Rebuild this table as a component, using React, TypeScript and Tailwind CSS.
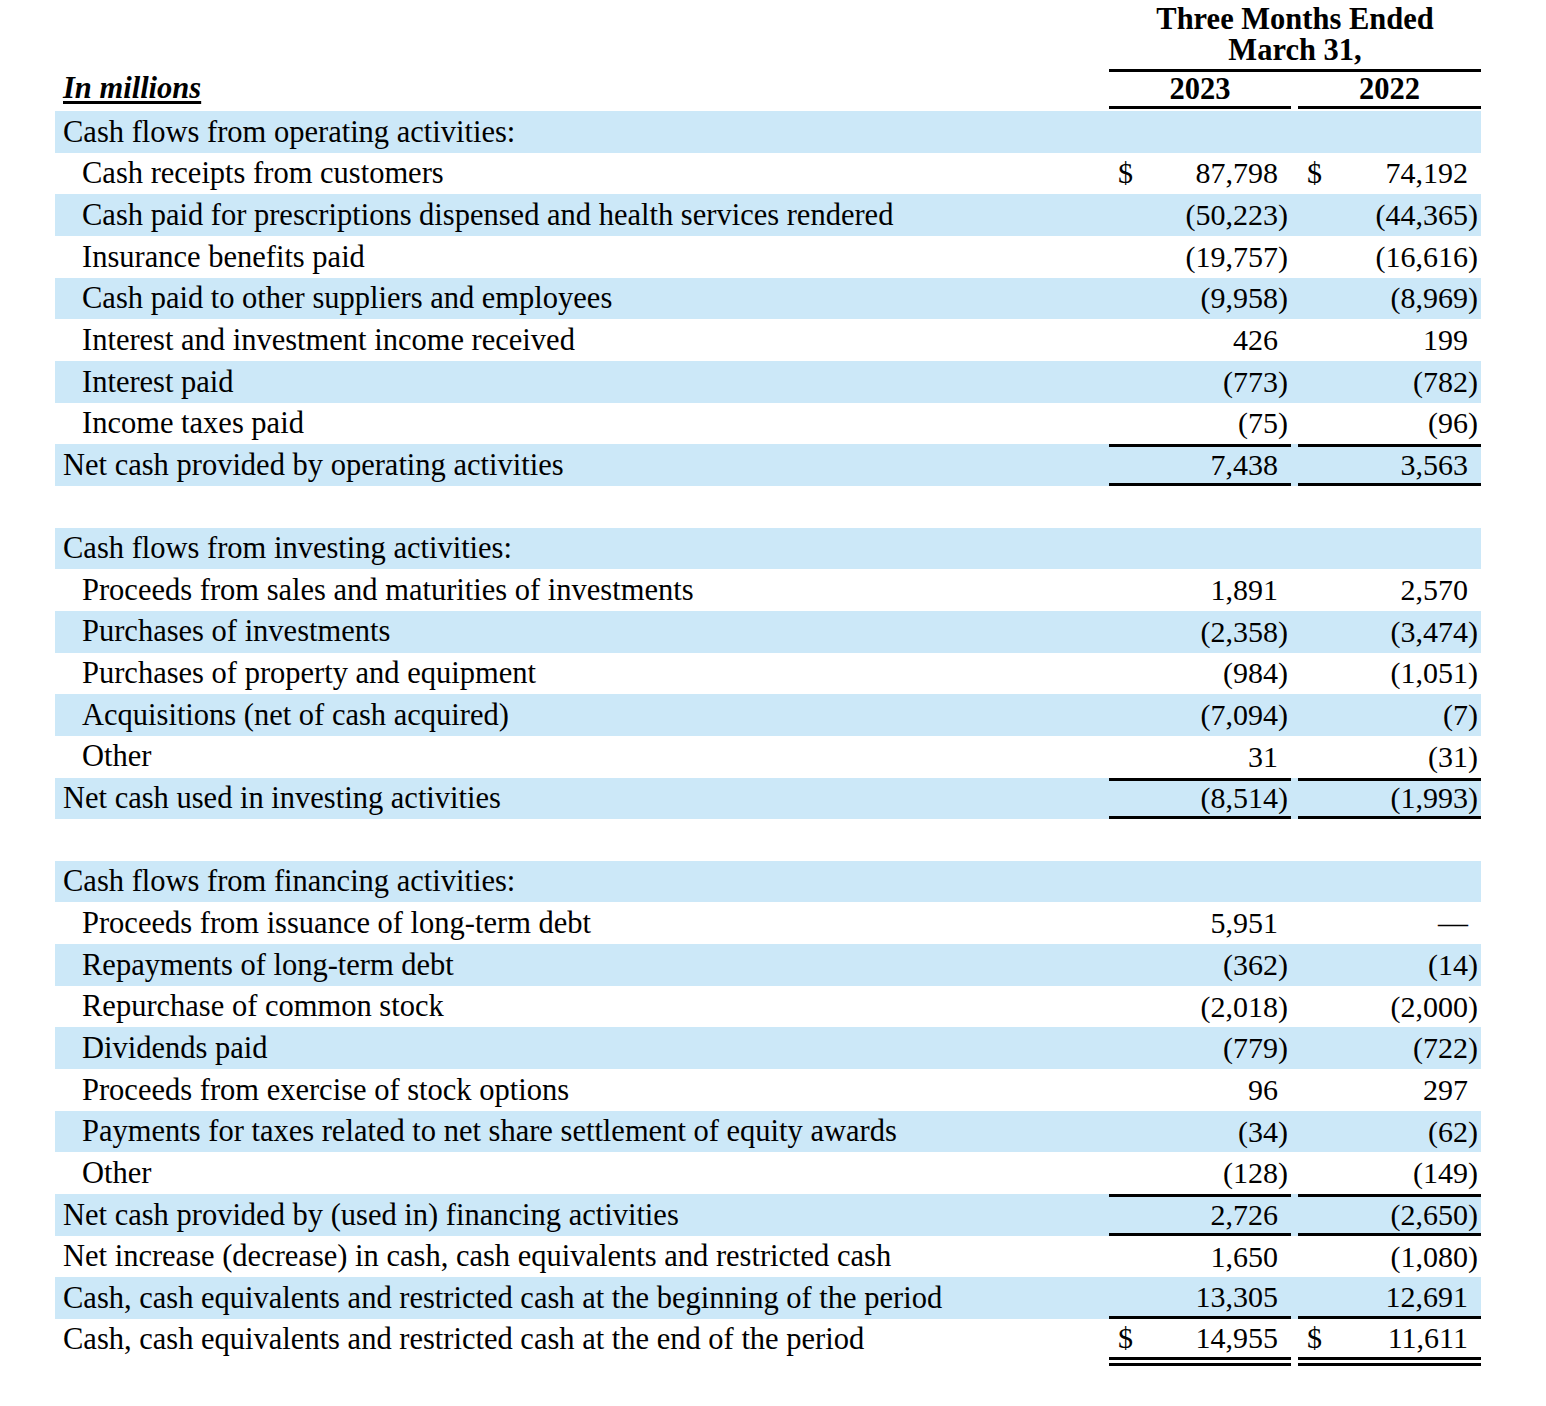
import React from 'react';

type Row = {
  label?: string;
  v1?: string;
  v2?: string;
  head?: boolean;
  dollar?: boolean;
  top?: boolean;
  bottom?: boolean;
  double?: boolean;
};

const rows: Row[] = [
  { label: 'Cash flows from operating activities:', head: true },
  { label: 'Cash receipts from customers', v1: '87,798', v2: '74,192', dollar: true },
  { label: 'Cash paid for prescriptions dispensed and health services rendered', v1: '(50,223)', v2: '(44,365)' },
  { label: 'Insurance benefits paid', v1: '(19,757)', v2: '(16,616)' },
  { label: 'Cash paid to other suppliers and employees', v1: '(9,958)', v2: '(8,969)' },
  { label: 'Interest and investment income received', v1: '426', v2: '199' },
  { label: 'Interest paid', v1: '(773)', v2: '(782)' },
  { label: 'Income taxes paid', v1: '(75)', v2: '(96)' },
  { label: 'Net cash provided by operating activities', v1: '7,438', v2: '3,563', head: true, top: true, bottom: true },
  {},
  { label: 'Cash flows from investing activities:', head: true },
  { label: 'Proceeds from sales and maturities of investments', v1: '1,891', v2: '2,570' },
  { label: 'Purchases of investments', v1: '(2,358)', v2: '(3,474)' },
  { label: 'Purchases of property and equipment', v1: '(984)', v2: '(1,051)' },
  { label: 'Acquisitions (net of cash acquired)', v1: '(7,094)', v2: '(7)' },
  { label: 'Other', v1: '31', v2: '(31)' },
  { label: 'Net cash used in investing activities', v1: '(8,514)', v2: '(1,993)', head: true, top: true, bottom: true },
  {},
  { label: 'Cash flows from financing activities:', head: true },
  { label: 'Proceeds from issuance of long-term debt', v1: '5,951', v2: '—' },
  { label: 'Repayments of long-term debt', v1: '(362)', v2: '(14)' },
  { label: 'Repurchase of common stock', v1: '(2,018)', v2: '(2,000)' },
  { label: 'Dividends paid', v1: '(779)', v2: '(722)' },
  { label: 'Proceeds from exercise of stock options', v1: '96', v2: '297' },
  { label: 'Payments for taxes related to net share settlement of equity awards', v1: '(34)', v2: '(62)' },
  { label: 'Other', v1: '(128)', v2: '(149)' },
  { label: 'Net cash provided by (used in) financing activities', v1: '2,726', v2: '(2,650)', head: true, top: true, bottom: true },
  { label: 'Net increase (decrease) in cash, cash equivalents and restricted cash', v1: '1,650', v2: '(1,080)', head: true },
  { label: 'Cash, cash equivalents and restricted cash at the beginning of the period', v1: '13,305', v2: '12,691', head: true, bottom: true },
  { label: 'Cash, cash equivalents and restricted cash at the end of the period', v1: '14,955', v2: '11,611', head: true, dollar: true, double: true },
];

function Amount({ value, dollar, row }: { value?: string; dollar?: boolean; row: Row }) {
  const neg = value?.endsWith(')');
  const body = neg ? value!.slice(0, -1) : value;
  return (
    <div
      className={
        'flex h-full items-center pl-[9px] text-[30px] ' +
        (row.top ? 'border-t-[3px] border-black ' : '') +
        (row.bottom ? 'border-b-[3px] border-black ' : '') +
        (row.double ? 'border-b-[9px] border-double border-black ' : '')
      }
    >
      <span className="w-[20px]">{dollar ? '$' : ''}</span>
      <span className="flex-1 text-right">{body}</span>
      <span className="w-[13px]">{neg ? ')' : ''}</span>
    </div>
  );
}

export default function App() {
  return (
    <div
      className="w-[1546px] min-h-[1406px] bg-white text-black text-[30.5px] leading-none"
      style={{ fontFamily: '"Liberation Serif", "Times New Roman", serif' }}
    >
      <div className="ml-[55px] w-[1426px]">
        <div className="flex h-[111px]">
          <div className="flex-1 flex items-end pb-[8px] pl-[8px]">
            <span className="font-bold italic underline underline-offset-[3px]">In millions</span>
          </div>
          <div className="w-[372px] flex flex-col font-bold">
            <div className="text-center pt-[4px] leading-[31px]">Three Months Ended</div>
            <div className="text-center leading-[31px]">March 31,</div>
            <div className="flex mt-[3px] border-t-[3px] border-black">
              <div className="w-[182px] h-[37px] flex items-center justify-center border-b-[3px] border-black">2023</div>
              <div className="w-[7px]" />
              <div className="w-[183px] h-[37px] flex items-center justify-center border-b-[3px] border-black">2022</div>
            </div>
          </div>
        </div>
        {rows.map((row, i) => (
          <div
            key={i}
            className={
              'flex ' +
              (row.double ? 'h-[47px] ' : 'h-[41.67px] ') +
              (i % 2 === 0 ? 'bg-[#cce8f8]' : 'bg-white')
            }
          >
            <div
              className={
                'flex-1 flex items-center ' +
                (row.head ? 'pl-[8px] ' : 'pl-[27px] ') +
                (row.double ? 'pb-[7px]' : '')
              }
            >
              {row.label}
            </div>
            {row.label && (
              <>
                <div className="w-[182px] h-full">
                  <Amount value={row.v1} dollar={row.dollar} row={row} />
                </div>
                <div className="w-[7px]" />
                <div className="w-[183px] h-full">
                  <Amount value={row.v2} dollar={row.dollar} row={row} />
                </div>
              </>
            )}
          </div>
        ))}
      </div>
    </div>
  );
}
